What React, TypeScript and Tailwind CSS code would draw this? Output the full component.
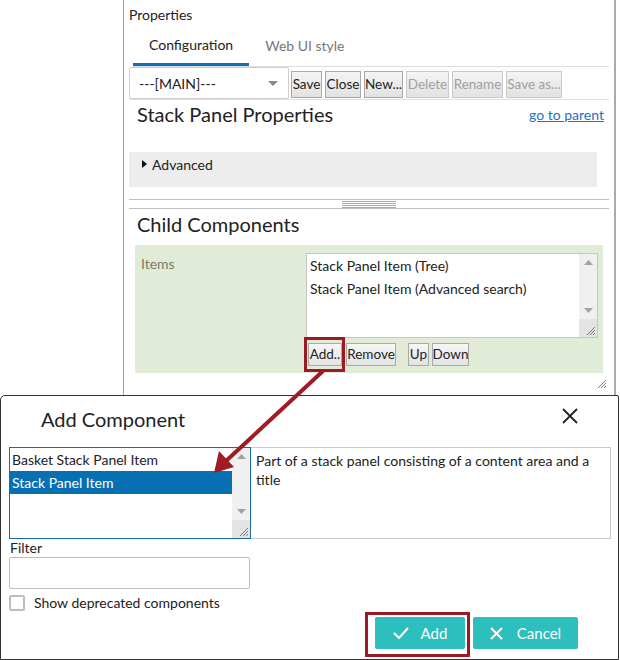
import React from "react";

const font = { fontFamily: "Lato, 'Open Sans', sans-serif" };

function Btn({ w, children, disabled }: { w: string; children: React.ReactNode; disabled?: boolean }) {
  return (
    <div
      className={`${w} h-[27px] flex items-center justify-center border border-[#a9a9a9] bg-gradient-to-b from-[#f4f4f4] to-[#e2e2e2] text-[13.5px] ${disabled ? "text-[#a0a0a0] border-[#c8c8c8]" : "text-[#222]"}`}
    >
      {children}
    </div>
  );
}

function SmallBtn({ w, children }: { w: string; children: React.ReactNode }) {
  return (
    <div className={`${w} h-[23px] flex items-center justify-center border border-[#a9a9a9] bg-gradient-to-b from-[#f6f6f6] to-[#e3e3e3] text-[13.5px] text-[#222]`}>
      {children}
    </div>
  );
}

function Grip() {
  return (
    <svg width="10" height="10" viewBox="0 0 10 10">
      <path d="M9 1 L1 9 M9 4 L4 9 M9 7 L7 9" stroke="#777" strokeWidth="1" />
    </svg>
  );
}

function Scrollbar({ h }: { h: string }) {
  return (
    <div className={`w-[18px] ${h} bg-[#f0f0f0] flex flex-col items-center justify-between`}>
      <div className="pt-[6px]">
        <svg width="9" height="5" viewBox="0 0 9 5"><path d="M0 5 L4.5 0 L9 5 Z" fill="#a3a3a3" /></svg>
      </div>
      <div className="flex flex-col items-center">
        <svg width="9" height="5" viewBox="0 0 9 5"><path d="M0 0 L4.5 5 L9 0 Z" fill="#a3a3a3" /></svg>
        <div className="w-[18px] h-[18px] mt-[6px] bg-[#e4e4e4] flex items-end justify-end pr-[1px] pb-[1px]">
          <Grip />
        </div>
      </div>
    </div>
  );
}

export default function App() {
  return (
    <div className="relative w-[620px] h-[660px] overflow-hidden bg-white text-[#222]" style={font}>
      {/* Properties panel */}
      <div className="ml-[123px] w-[493px] h-[395px] border-l border-l-[#a0a0a0] border-r-2 border-r-[#aaaaaa] pl-[5px] pr-[5px] flex flex-col">
        <div className="h-[30px] pt-[4px] text-[14px] text-[#222]">Properties</div>
        <div className="ml-[4px] h-[37px] flex items-end border-b border-[#dcdcdc]">
          <div className="h-[37px] px-[16px] flex items-center pb-[4px] border-b-[3px] border-[#0a72b8] text-[14px] text-[#222]">Configuration</div>
          <div className="h-[37px] px-[16px] flex items-center pb-[4px] text-[14px] text-[#777]">Web UI style</div>
        </div>
        <div className="h-[33px] flex items-start gap-[3px] border-b border-[#e0e0e0]">
          <div className="w-[160px] h-[32px] border border-[#cfcfcf] rounded-[2px] flex items-center justify-between pl-[9px] pr-[10px] text-[14px]">
            <span>---[MAIN]---</span>
            <svg width="10" height="5" viewBox="0 0 10 5"><path d="M0 0 L5 5 L10 0 Z" fill="#888" /></svg>
          </div>
          <div className="mt-[4px] ml-[-1px] flex gap-[3px]">
            <Btn w="w-[31px]">Save</Btn>
            <Btn w="w-[36px]">Close</Btn>
            <Btn w="w-[39px]">New...</Btn>
            <Btn w="w-[43px]" disabled>Delete</Btn>
            <Btn w="w-[51px]" disabled>Rename</Btn>
            <Btn w="w-[56px]" disabled>Save as...</Btn>
          </div>
        </div>
        <div className="h-[52px] flex justify-between items-start pt-[1px] pl-[8px]">
          <div className="text-[20px] text-[#222] leading-[26px]">Stack Panel Properties</div>
          <a className="text-[14px] text-[#1a73c4] underline mt-[3px] mr-[5px]">go to parent</a>
        </div>
        <div className="w-[468px] h-[35px] bg-[#ededed] flex items-start pt-[2px] pl-[13px] gap-[5px] text-[14px]">
          <svg className="mt-[6px]" width="5" height="8" viewBox="0 0 5 8"><path d="M0 0 L5 4 L0 8 Z" fill="#111" /></svg>
          <span>Advanced</span>
        </div>
        <div className="mt-[12px] h-[10px] border-t border-b border-[#bdbdbd] flex justify-center">
          <div className="w-[54px] flex flex-col gap-[1px] pt-[1px]">
            <div className="h-px bg-[#aaa]" />
            <div className="h-px bg-[#aaa]" />
            <div className="h-px bg-[#aaa]" />
            <div className="h-px bg-[#aaa]" />
          </div>
        </div>
        <div className="h-[36px] pl-[8px] pt-[2px] text-[20px] leading-[26px] text-[#222]">Child Components</div>
        <div className="ml-[6px] w-[468px] h-[128px] bg-[#e0ebd8] flex pt-[8px] pl-[6px]">
          <div className="w-[165px] text-[14px] text-[#7a7a6a]">Items</div>
          <div className="flex flex-col">
            <div className="w-[292px] h-[85px] border border-[#c6c6c6] bg-white flex">
              <div className="flex-1 pl-[3px] pt-[0px] text-[14px] leading-[23px] text-[#222]">
                <div>Stack Panel Item (Tree)</div>
                <div>Stack Panel Item (Advanced search)</div>
              </div>
              <Scrollbar h="h-[83px]" />
            </div>
            <div className="flex mt-[5px] ml-[2px]">
              <SmallBtn w="w-[34px]">Add..</SmallBtn>
              <div className="ml-[4px]"><SmallBtn w="w-[50px]">Remove</SmallBtn></div>
              <div className="ml-[12px]"><SmallBtn w="w-[21px]">Up</SmallBtn></div>
              <div className="ml-[3px]"><SmallBtn w="w-[37px]">Down</SmallBtn></div>
            </div>
          </div>
        </div>
        <div className="flex justify-end pr-[2px] mt-[6px]">
          <Grip />
        </div>
      </div>

      {/* Dialog */}
      <div className="w-[619px] h-[265px] border border-[#333] rounded-tl-[5px] rounded-tr-[2px] bg-white flex flex-col">
        <div className="h-[51px] flex justify-between items-start pl-[40px] pr-[40px] pt-[10px]">
          <div className="text-[20px] leading-[26px] text-[#222]">Add Component</div>
          <svg className="mt-[2px]" width="16" height="16" viewBox="0 0 16 16"><path d="M1 1 L15 15 M15 1 L1 15" stroke="#222" strokeWidth="1.8" /></svg>
        </div>
        <div className="flex pl-[8px]">
          <div className="w-[242px] h-[92px] border border-[#1c6aa8] flex">
            <div className="flex-1 text-[14px] leading-[23px]">
              <div className="pl-[2px] pt-[0px] h-[23px]">Basket Stack Panel Item</div>
              <div className="pl-[2px] h-[23px] bg-[#0670b3] text-white">Stack Panel Item</div>
            </div>
            <Scrollbar h="h-[90px]" />
          </div>
          <div className="w-[360px] h-[92px] border border-[#cacaca] border-l-0 pl-[5px] pt-[3px] pr-[14px] text-[14px] leading-[19px]">
            Part of a stack panel consisting of a content area and a title
          </div>
        </div>
        <div className="pl-[9px] mt-[0px] text-[14px] leading-[18px]">Filter</div>
        <div className="ml-[8px] w-[241px] h-[32px] border border-[#bcbcbc] rounded-[2px]" />
        <div className="ml-[8px] mt-[3px] flex items-center gap-[9px] text-[14px]">
          <div className="w-[16px] h-[16px] border-2 border-[#bdbdbd] rounded-[2px]" />
          <span>Show deprecated components</span>
        </div>
        <div className="flex justify-end pr-[40px] mt-[4px] gap-[8px]">
          <div className="w-[90px] h-[32px] bg-[#2dbfbe] rounded-[2px] flex items-center justify-center gap-[12px] text-white text-[15px]">
            <svg width="16" height="12" viewBox="0 0 16 12"><path d="M1 6 L6 11 L15 1" stroke="white" strokeWidth="2" fill="none" /></svg>
            <span>Add</span>
          </div>
          <div className="w-[105px] h-[32px] bg-[#2dbfbe] rounded-[2px] flex items-center justify-center gap-[14px] text-white text-[15px]">
            <svg width="13" height="13" viewBox="0 0 13 13"><path d="M1 1 L12 12 M12 1 L1 12" stroke="white" strokeWidth="2" /></svg>
            <span>Cancel</span>
          </div>
        </div>
      </div>

      {/* Annotation overlays */}
      <div className="absolute left-[304px] top-[337px] w-[41px] h-[35px] border-[3px] border-[#9b1b24]" />
      <div className="absolute left-[365px] top-[612px] w-[105px] h-[45px] border-[3px] border-[#9b1b24]" />
      <svg className="absolute left-0 top-0" width="620" height="660" viewBox="0 0 620 660">
        <line x1="323" y1="371" x2="226" y2="461" stroke="#a01c24" strokeWidth="4" />
        <path d="M214 473 L219 451 L234 467 Z" fill="#a01c24" />
      </svg>
    </div>
  );
}
